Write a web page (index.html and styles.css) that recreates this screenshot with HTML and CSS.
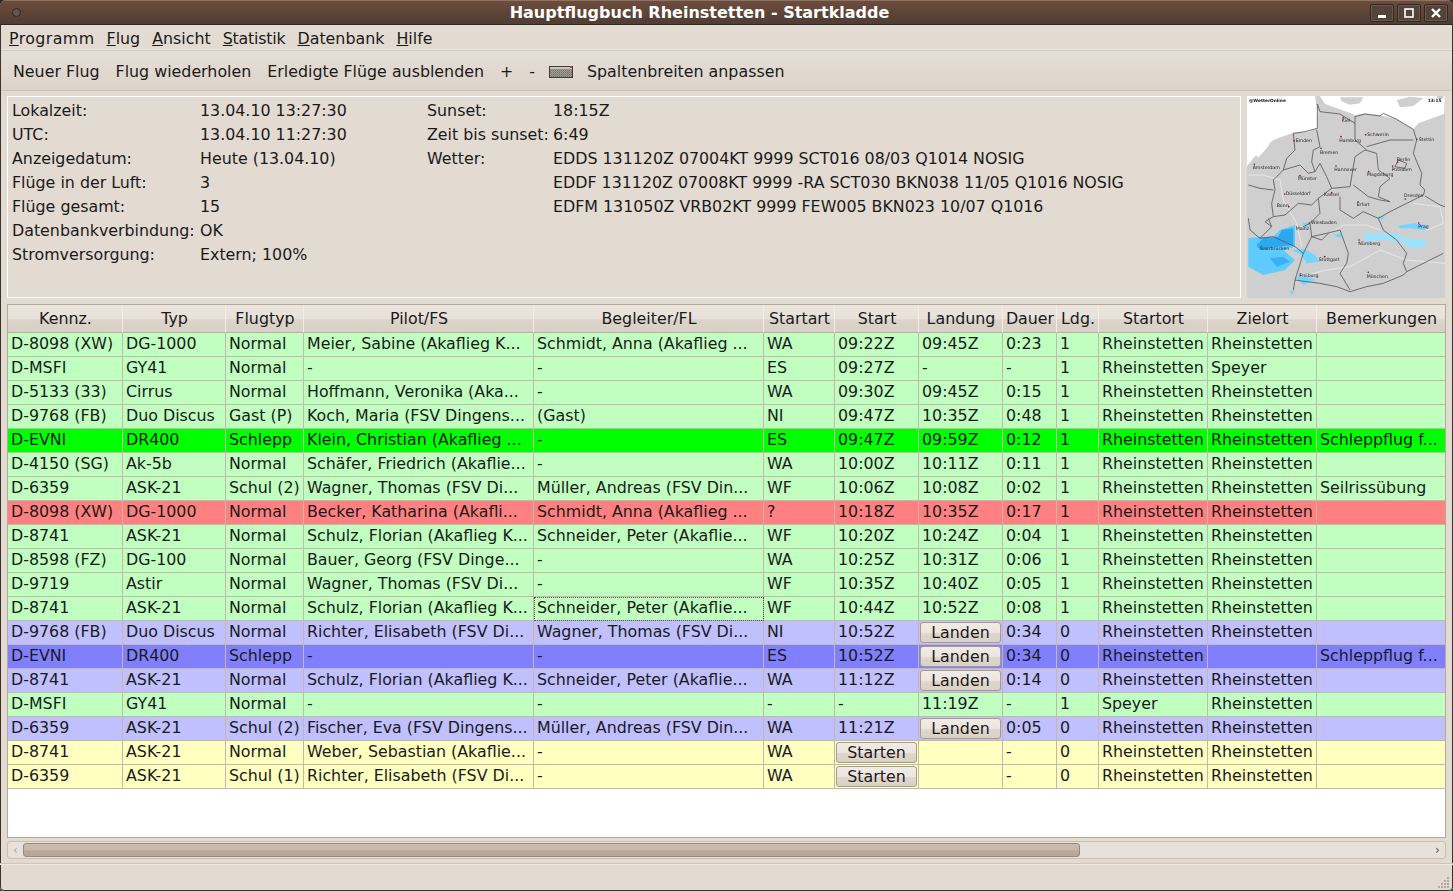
FILE: index.html
```html
<!DOCTYPE html>
<html lang="de">
<head>
  <meta charset="UTF-8">
  <title>Hauptflugbuch Rheinstetten - Startkladde</title>
  <link rel="stylesheet" href="styles.css">
</head>
<body>
  <div class="window">
    <div class="titlebar">
      <span class="close-dot"></span>
      <span class="title">Hauptflugbuch Rheinstetten - Startkladde</span>
      <div class="win-buttons">
        <span class="win-btn"><svg width="12" height="12" viewBox="0 0 12 12"><rect x="2" y="8" width="8" height="3" fill="#fff"/></svg></span>
        <span class="win-btn"><svg width="12" height="12" viewBox="0 0 12 12"><rect x="2" y="2" width="8" height="8" fill="none" stroke="#fff" stroke-width="1.6"/></svg></span>
        <span class="win-btn"><svg width="12" height="12" viewBox="0 0 12 12"><path d="M2 2l8 8M10 2l-8 8" stroke="#fff" stroke-width="2.4"/></svg></span>
      </div>
    </div>

    <div class="menubar">
      <span class="m-wide"><u>P</u>rogramm</span>
      <span><u>F</u>lug</span>
      <span><u>A</u>nsicht</span>
      <span class="m-tight"><u>S</u>tatistik</span>
      <span><u>D</u>atenbank</span>
      <span><u>H</u>ilfe</span>
    </div>

    <div class="toolbar">
      <span>Neuer Flug</span>
      <span>Flug wiederholen</span>
      <span>Erledigte Flüge ausblenden</span>
      <span>+</span>
      <span>-</span>
      <svg class="tool-icon" width="24" height="12" viewBox="0 0 24 12">
        <defs>
          <pattern id="grain" width="2" height="2" patternUnits="userSpaceOnUse">
            <rect width="2" height="2" fill="#a09b91"/>
            <rect width="1" height="1" fill="#77726a"/>
            <rect x="1" y="1" width="1" height="1" fill="#8a857c"/>
          </pattern>
        </defs>
        <rect width="24" height="12" fill="#3f3b36"/>
        <rect x="1" y="1" width="22" height="10" fill="url(#grain)"/>
        <rect x="1" y="1" width="22" height="2" fill="#c9c5bc"/>
        <rect x="21" y="0" width="2" height="2" fill="#c0392b"/>
      </svg>
      <span>Spaltenbreiten anpassen</span>
    </div>

    <div class="info-row">
      <div class="info-panel">
        <div class="info-col col-a">
          <span>Lokalzeit:</span><span>13.04.10 13:27:30</span>
          <span>UTC:</span><span>13.04.10 11:27:30</span>
          <span>Anzeigedatum:</span><span>Heute (13.04.10)</span>
          <span>Flüge in der Luft:</span><span>3</span>
          <span>Flüge gesamt:</span><span>15</span>
          <span>Datenbankverbindung:</span><span>OK</span>
          <span>Stromversorgung:</span><span>Extern; 100%</span>
        </div>
        <div class="info-col col-b">
          <span>Sunset:</span><span>18:15Z</span>
          <span>Zeit bis sunset:</span><span>6:49</span>
          <span>Wetter:</span><span>EDDS 131120Z 07004KT 9999 SCT016 08/03 Q1014 NOSIG</span>
          <span></span><span>EDDF 131120Z 07008KT 9999 -RA SCT030 BKN038 11/05 Q1016 NOSIG</span>
          <span></span><span>EDFM 131050Z VRB02KT 9999 FEW005 BKN023 10/07 Q1016</span>
        </div>
      </div>
      <div class="map">
        <svg width="198" height="202" viewBox="21 18 594 606">
          <rect x="21" y="18" width="594" height="606" fill="#cfcfcf"/>
          <!-- sea -->
          <path d="M21 18H225L228 40 235 65 232 115 205 125 160 128 100 150 60 185 40 205 21 228Z" fill="#fff"/>
          <path d="M240 18L255 42 300 58 345 75 375 70 420 76 470 88 520 118 535 100 612 72 615 18Z" fill="#fff"/>
          <path d="M50 170l40-8-20 24-15 16-10-8z" fill="#fff"/>
          <path d="M300 22h70l-10 18-30 4-25-10zM470 30l40-10 40 4-30 24-40 4zM590 18h22l-4 10-14-2z" fill="#cfcfcf"/>
          <g fill="none" stroke="#e8e8e8" stroke-width="3">
            <path d="M25 255L70 255 120 270 130 330 170 400 185 470"/>
            <path d="M180 560L260 540 330 530 420 480 500 510 615 520"/>
            <path d="M270 430L310 405 380 405 420 420"/>
            <path d="M520 340L600 350 610 400 560 420"/>
            <path d="M410 190L415 240 450 265"/>
          </g>
          <!-- rain -->
          <path d="M25 445L60 440 100 440 120 420 165 405 165 470 130 480 165 510 135 540 70 555 25 530Z" fill="#5ecbff"/>
          <path d="M70 445L115 440 125 420 160 415 160 465 110 470 60 480 50 465Z" fill="#2aa8f0"/>
          <path d="M90 505L130 500 150 515 110 530Z" fill="#3ab0f0"/>
          <path d="M155 480L195 478 225 495 240 515 200 520 185 495Z" fill="#74d4ff"/>
          <path d="M165 560L205 560 225 570 190 585Z" fill="#74d4ff"/>
          <path d="M370 430L420 430 470 432 500 445 555 450 560 470 520 475 480 455 430 450 375 455Z" fill="#9ce2ff"/>
          <path d="M475 408L520 400 560 405 555 420 510 415 480 415Z" fill="#74d4ff"/>
          <path d="M410 380L435 378 425 390ZM280 432L305 432 305 443 290 440ZM185 400L210 400 200 415ZM150 605L165 600 155 615Z" fill="#74d4ff"/>
          <!-- borders -->
          <g fill="none" stroke="#5c5c5c" stroke-width="2.6">
            <path d="M232 42L240 65 300 72 345 100 345 80 375 72 420 78 430 70 470 88 520 118 530 150 520 190 545 250 540 285 555 300 550 315 500 340 450 365 415 385 430 420 470 450 500 490 490 520 500 545 490 555 430 580 380 590 330 605 290 590 240 580 200 575 165 570 160 600"/>
            <path d="M232 42L232 115 195 125 160 130 165 180 140 205 130 240 100 270 105 300 95 340 100 380 75 395 95 410 60 445 100 440 165 470 190 490 165 570"/>
            <path d="M25 285L60 295 100 300M100 380L135 375 175 340M25 385L30 420 60 445M95 410L85 385"/>
            <path d="M230 120L240 170 220 180 215 215 225 245 205 250 180 225 130 240"/>
            <path d="M225 245L240 220 260 260 275 295 235 325 215 345 175 340"/>
            <path d="M275 295L330 290 345 200 375 180 410 190 415 240 450 265 420 290 415 320 450 335 420 330 385 320 340 285"/>
            <path d="M300 320L300 360 340 385 370 365 415 385"/>
            <path d="M210 400L215 440 260 430 300 420 325 490 320 520 300 550 330 600"/>
            <path d="M235 325L240 370 210 400 190 410M265 430L245 450 215 440 190 490"/>
            <path d="M345 100L345 150 380 180M380 170L450 150 520 150M465 230L475 210 500 220 495 235 465 230"/>
            <path d="M555 318L600 345 615 350M500 545L610 490"/>
          </g>
          <g fill="#8a1a1a">
            <circle cx="310" cy="83" r="2.5"/><circle cx="377" cy="134" r="2.5"/><circle cx="303" cy="140" r="2.5"/><circle cx="530" cy="148" r="2.5"/>
            <circle cx="162" cy="152" r="2.5"/><circle cx="243" cy="175" r="2.5"/><circle cx="43" cy="223" r="2.5"/><circle cx="288" cy="228" r="2.5"/>
            <circle cx="473" cy="217" r="2.5"/><circle cx="458" cy="228" r="2.5"/><circle cx="386" cy="245" r="2.5"/><circle cx="180" cy="257" r="2.5"/>
            <circle cx="134" cy="312" r="2.5"/><circle cx="275" cy="308" r="2.5"/><circle cx="496" cy="327" r="2.5"/><circle cx="146" cy="350" r="2.5"/>
            <circle cx="354" cy="336" r="2.5"/><circle cx="536" cy="399" r="2.5"/><circle cx="208" cy="399" r="2.5"/><circle cx="357" cy="450" r="2.5"/>
            <circle cx="254" cy="500" r="2.5"/><circle cx="182" cy="556" r="2.5"/><circle cx="385" cy="547" r="2.5"/>
          </g>
          <g class="map-labels">
            <text x="27" y="36" class="map-brand">@WetterOnline</text>
            <text x="563" y="36" class="map-brand">13:15</text>
            <text x="305" y="97">Kiel</text>
            <text x="382" y="138">Schwerin</text>
            <text x="298" y="155">Hamburg</text>
            <text x="536" y="152">Stettin</text>
            <text x="167" y="155">Emden</text>
            <text x="240" y="193">Bremen</text>
            <text x="38" y="238">Amsterdam</text>
            <text x="283" y="243">Hannover</text>
            <text x="470" y="212">Berlin</text>
            <text x="455" y="243">Potsdam</text>
            <text x="381" y="258">Magdeburg</text>
            <text x="174" y="270">Münster</text>
            <text x="137" y="316">Düsseldorf</text>
            <text x="252" y="319">Kassel</text>
            <text x="492" y="322">Dresden</text>
            <text x="110" y="352">Bonn</text>
            <text x="350" y="349">Erfurt</text>
            <text x="535" y="414">Prag</text>
            <text x="213" y="403">Wiesbaden</text>
            <text x="167" y="421">Mainz</text>
            <text x="355" y="464">Nürnberg</text>
            <text x="60" y="480">Saarbrücken</text>
            <text x="236" y="514">Stuttgart</text>
            <text x="178" y="562">Freiburg</text>
            <text x="380" y="563">München</text>
          </g>
        </svg>
      </div>
    </div>

    <div class="table-wrap">
      <table class="flights">
        <colgroup>
          <col class="c-kenn"><col class="c-typ"><col class="c-art"><col class="c-pilot"><col class="c-pilot">
          <col class="c-startart"><col class="c-time"><col class="c-time"><col class="c-dauer"><col class="c-ldg">
          <col class="c-ort"><col class="c-ort"><col class="c-rem">
        </colgroup>
        <thead>
          <tr><th>Kennz.</th><th>Typ</th><th>Flugtyp</th><th>Pilot/FS</th><th>Begleiter/FL</th><th>Startart</th><th>Start</th><th>Landung</th><th>Dauer</th><th>Ldg.</th><th>Startort</th><th>Zielort</th><th>Bemerkungen</th></tr>
        </thead>
        <tbody>
          <tr class="done"><td>D-8098 (XW)</td><td>DG-1000</td><td>Normal</td><td>Meier, Sabine (Akaflieg K...</td><td>Schmidt, Anna (Akaflieg ...</td><td>WA</td><td>09:22Z</td><td>09:45Z</td><td>0:23</td><td>1</td><td>Rheinstetten</td><td>Rheinstetten</td><td></td></tr>
          <tr class="done"><td>D-MSFI</td><td>GY41</td><td>Normal</td><td>-</td><td>-</td><td>ES</td><td>09:27Z</td><td>-</td><td>-</td><td>1</td><td>Rheinstetten</td><td>Speyer</td><td></td></tr>
          <tr class="done"><td>D-5133 (33)</td><td>Cirrus</td><td>Normal</td><td>Hoffmann, Veronika (Aka...</td><td>-</td><td>WA</td><td>09:30Z</td><td>09:45Z</td><td>0:15</td><td>1</td><td>Rheinstetten</td><td>Rheinstetten</td><td></td></tr>
          <tr class="done"><td>D-9768 (FB)</td><td>Duo Discus</td><td>Gast (P)</td><td>Koch, Maria (FSV Dingens...</td><td>(Gast)</td><td>NI</td><td>09:47Z</td><td>10:35Z</td><td>0:48</td><td>1</td><td>Rheinstetten</td><td>Rheinstetten</td><td></td></tr>
          <tr class="tow-done"><td>D-EVNI</td><td>DR400</td><td>Schlepp</td><td>Klein, Christian (Akaflieg ...</td><td>-</td><td>ES</td><td>09:47Z</td><td>09:59Z</td><td>0:12</td><td>1</td><td>Rheinstetten</td><td>Rheinstetten</td><td>Schleppflug f...</td></tr>
          <tr class="done"><td>D-4150 (SG)</td><td>Ak-5b</td><td>Normal</td><td>Schäfer, Friedrich (Akaflie...</td><td>-</td><td>WA</td><td>10:00Z</td><td>10:11Z</td><td>0:11</td><td>1</td><td>Rheinstetten</td><td>Rheinstetten</td><td></td></tr>
          <tr class="done"><td>D-6359</td><td>ASK-21</td><td>Schul (2)</td><td>Wagner, Thomas (FSV Di...</td><td>Müller, Andreas (FSV Din...</td><td>WF</td><td>10:06Z</td><td>10:08Z</td><td>0:02</td><td>1</td><td>Rheinstetten</td><td>Rheinstetten</td><td>Seilrissübung</td></tr>
          <tr class="error"><td>D-8098 (XW)</td><td>DG-1000</td><td>Normal</td><td>Becker, Katharina (Akafli...</td><td>Schmidt, Anna (Akaflieg ...</td><td>?</td><td>10:18Z</td><td>10:35Z</td><td>0:17</td><td>1</td><td>Rheinstetten</td><td>Rheinstetten</td><td></td></tr>
          <tr class="done"><td>D-8741</td><td>ASK-21</td><td>Normal</td><td>Schulz, Florian (Akaflieg K...</td><td>Schneider, Peter (Akaflie...</td><td>WF</td><td>10:20Z</td><td>10:24Z</td><td>0:04</td><td>1</td><td>Rheinstetten</td><td>Rheinstetten</td><td></td></tr>
          <tr class="done"><td>D-8598 (FZ)</td><td>DG-100</td><td>Normal</td><td>Bauer, Georg (FSV Dinge...</td><td>-</td><td>WA</td><td>10:25Z</td><td>10:31Z</td><td>0:06</td><td>1</td><td>Rheinstetten</td><td>Rheinstetten</td><td></td></tr>
          <tr class="done"><td>D-9719</td><td>Astir</td><td>Normal</td><td>Wagner, Thomas (FSV Di...</td><td>-</td><td>WF</td><td>10:35Z</td><td>10:40Z</td><td>0:05</td><td>1</td><td>Rheinstetten</td><td>Rheinstetten</td><td></td></tr>
          <tr class="done"><td>D-8741</td><td>ASK-21</td><td>Normal</td><td>Schulz, Florian (Akaflieg K...</td><td class="focus">Schneider, Peter (Akaflie...</td><td>WF</td><td>10:44Z</td><td>10:52Z</td><td>0:08</td><td>1</td><td>Rheinstetten</td><td>Rheinstetten</td><td></td></tr>
          <tr class="air"><td>D-9768 (FB)</td><td>Duo Discus</td><td>Normal</td><td>Richter, Elisabeth (FSV Di...</td><td>Wagner, Thomas (FSV Di...</td><td>NI</td><td>10:52Z</td><td class="btn-cell"><button>Landen</button></td><td>0:34</td><td>0</td><td>Rheinstetten</td><td>Rheinstetten</td><td></td></tr>
          <tr class="tow-air"><td>D-EVNI</td><td>DR400</td><td>Schlepp</td><td>-</td><td>-</td><td>ES</td><td>10:52Z</td><td class="btn-cell"><button>Landen</button></td><td>0:34</td><td>0</td><td>Rheinstetten</td><td></td><td>Schleppflug f...</td></tr>
          <tr class="air"><td>D-8741</td><td>ASK-21</td><td>Normal</td><td>Schulz, Florian (Akaflieg K...</td><td>Schneider, Peter (Akaflie...</td><td>WA</td><td>11:12Z</td><td class="btn-cell"><button>Landen</button></td><td>0:14</td><td>0</td><td>Rheinstetten</td><td>Rheinstetten</td><td></td></tr>
          <tr class="done"><td>D-MSFI</td><td>GY41</td><td>Normal</td><td>-</td><td>-</td><td>-</td><td>-</td><td>11:19Z</td><td>-</td><td>1</td><td>Speyer</td><td>Rheinstetten</td><td></td></tr>
          <tr class="air"><td>D-6359</td><td>ASK-21</td><td>Schul (2)</td><td>Fischer, Eva (FSV Dingens...</td><td>Müller, Andreas (FSV Din...</td><td>WA</td><td>11:21Z</td><td class="btn-cell"><button>Landen</button></td><td>0:05</td><td>0</td><td>Rheinstetten</td><td>Rheinstetten</td><td></td></tr>
          <tr class="prep"><td>D-8741</td><td>ASK-21</td><td>Normal</td><td>Weber, Sebastian (Akaflie...</td><td>-</td><td>WA</td><td class="btn-cell"><button>Starten</button></td><td></td><td>-</td><td>0</td><td>Rheinstetten</td><td>Rheinstetten</td><td></td></tr>
          <tr class="prep"><td>D-6359</td><td>ASK-21</td><td>Schul (1)</td><td>Richter, Elisabeth (FSV Di...</td><td>-</td><td>WA</td><td class="btn-cell"><button>Starten</button></td><td></td><td>-</td><td>0</td><td>Rheinstetten</td><td>Rheinstetten</td><td></td></tr>
        </tbody>
      </table>
    </div>

    <div class="scrollbar">
      <span class="arrow off">‹</span>
      <div class="trough"><div class="thumb"></div></div>
      <span class="arrow">›</span>
    </div>
    <div class="statusbar">
      <svg class="grip" width="12" height="12" viewBox="0 0 12 12" fill="#b3a89b">
        <rect x="9" y="0" width="2" height="2"/>
        <rect x="6" y="3" width="2" height="2"/><rect x="9" y="3" width="2" height="2"/>
        <rect x="3" y="6" width="2" height="2"/><rect x="6" y="6" width="2" height="2"/><rect x="9" y="6" width="2" height="2"/>
        <rect x="0" y="9" width="2" height="2"/><rect x="3" y="9" width="2" height="2"/><rect x="6" y="9" width="2" height="2"/><rect x="9" y="9" width="2" height="2"/>
      </svg>
    </div>
  </div>
</body>
</html>
```

FILE: styles.css
```css
* {
  box-sizing: border-box;
}

html, body {
  margin: 0;
  padding: 0;
  background: #2e2a26;
}

body {
  width: 1453px;
  height: 891px;
  overflow: hidden;
  font-family: "DejaVu Sans", sans-serif;
  font-size: 15.85px;
  color: #1a1a1a;
}

.window {
  display: flex;
  flex-direction: column;
  width: 1453px;
  height: 891px;
  background: #e3dbd2;
  border-radius: 6px 6px 4px 4px;
  outline: 1px solid #3a332c;
  outline-offset: -1px;
  overflow: hidden;
}

.titlebar {
  display: flex;
  align-items: center;
  position: relative;
  height: 25px;
  flex: none;
  background: linear-gradient(#6d4c3c, #4f3d33);
  border-top: 1px solid #8a7466;
  border-bottom: 1px solid #2f2722;
}

.close-dot {
  width: 9px;
  height: 9px;
  margin-left: 12px;
  border-radius: 50%;
  border: 1px solid #2f2722;
  background: #62574f;
}

.title {
  position: absolute;
  left: 0;
  right: 54px;
  text-align: center;
  color: #fff;
  font-weight: bold;
  font-size: 16px;
}

.win-buttons {
  display: flex;
  gap: 3px;
  margin-left: auto;
  margin-right: 5px;
}

.win-btn {
  display: flex;
  align-items: center;
  justify-content: center;
  width: 24px;
  height: 18px;
  border: 1px solid #33291f;
  border-radius: 2px;
  box-shadow: inset 0 0 0 1px #6d5a4d;
  background: #54433a;
}

.menubar {
  display: flex;
  gap: 12px;
  height: 26px;
  flex: none;
  align-items: center;
  padding-left: 9px;
  padding-top: 2px;
  background: #e3dbd2;
  border-bottom: 1px solid #cfc5ba;
  box-shadow: inset 0 -1px 0 #efe9e2;
}

.m-wide {
  letter-spacing: 0.4px;
}

.m-tight {
  letter-spacing: -0.2px;
}

.toolbar {
  display: flex;
  align-items: center;
  gap: 16px;
  height: 40px;
  flex: none;
  padding-left: 13px;
  padding-top: 2px;
  background: linear-gradient(#e6dfd7, #dcd3ca);
  border-bottom: 1px solid #cdc2b6;
}

.tool-icon {
  margin: 0 -2px;
}

.info-row {
  display: flex;
  gap: 6px;
  height: 202px;
  flex: none;
  margin: 5px 8px 0 7px;
}

.info-panel {
  display: flex;
  flex: 1;
  padding-top: 1px;
  padding-left: 4px;
  border: 1px solid #fff;
}

.info-col {
  display: grid;
  grid-auto-rows: 24px;
  align-items: center;
  align-content: start;
}

.col-a {
  grid-template-columns: 188px auto;
  width: 415px;
}

.col-b {
  grid-template-columns: 126px auto;
}

.map {
  width: 198px;
  flex: none;
  background: #fff;
}

.map svg {
  display: block;
  filter: blur(0.35px);
}

.map-labels text {
  font-family: "DejaVu Sans", sans-serif;
  font-size: 14px;
  fill: #222;
}

.map-labels .map-brand {
  font-weight: bold;
  font-size: 13px;
  fill: #111;
}

.table-wrap {
  flex: none;
  height: 534px;
  margin: 6px 7px 0;
  background: #fff;
  border: 1px solid #b5a99c;
  overflow: hidden;
}

.flights {
  table-layout: fixed;
  border-collapse: separate;
  border-spacing: 0;
  width: 1438px;
}

.c-kenn { width: 115px; }
.c-typ { width: 103px; }
.c-art { width: 78px; }
.c-pilot { width: 230px; }
.c-startart { width: 71px; }
.c-time { width: 84px; }
.c-dauer { width: 54px; }
.c-ldg { width: 42px; }
.c-ort { width: 109px; }
.c-rem { width: 129px; }

.flights th {
  height: 28px;
  padding: 0 0 0 1px;
  font-weight: normal;
  white-space: nowrap;
  background: linear-gradient(#ebe5de 0, #e8e1da 50%, #dcd3ca 55%, #d8cfc5 100%);
  border-right: 1px solid #f2ede7;
  border-bottom: 1px solid #b9ada1;
}

.flights td {
  height: 24px;
  padding: 0 0 3px 3px;
  white-space: nowrap;
  overflow: hidden;
  border-right: 1px solid #c4b8ae;
  border-bottom: 1px solid #c4b8ae;
}

.done td { background: #c0ffc0; }
.tow-done td { background: #00ff00; }
.error td { background: #ff8080; }
.air td { background: #c0c0ff; }
.tow-air td { background: #8080ff; }
.prep td { background: #ffffc0; }

.flights td.focus {
  outline: 1px dotted #555;
  outline-offset: -1px;
}

.flights td.btn-cell {
  padding: 0 0 0 1px;
  vertical-align: middle;
}

.flights button {
  display: block;
  width: 81px;
  height: 21px;
  padding: 0;
  font: inherit;
  color: inherit;
  border: 1px solid #a8998b;
  border-radius: 3px;
  background: linear-gradient(#f0ebe5 0, #ebe5de 50%, #dfd6cd 55%, #d9d0c6 100%);
}

.scrollbar {
  display: flex;
  align-items: center;
  height: 18px;
  flex: none;
  margin: 3px 7px 0;
  background: #e8e1da;
  border: 1px solid #c9beb2;
  border-radius: 3px;
}

.arrow {
  width: 15px;
  flex: none;
  text-align: center;
  font-size: 12px;
  line-height: 14px;
  color: #5c544c;
}

.arrow.off {
  color: #b0a79d;
}

.trough {
  flex: 1;
  height: 14px;
}

.thumb {
  width: 1057px;
  height: 14px;
  border: 1px solid #96887b;
  border-radius: 3px;
  background: linear-gradient(#c9bcaf 0, #c6b9ac 50%, #b8a99b 55%, #b5a698 100%);
}

.statusbar {
  position: relative;
  flex: 1;
  margin-top: 4px;
  border-top: 1px solid #cfc5ba;
  box-shadow: inset 0 1px 0 #efe9e2;
}

.grip {
  position: absolute;
  right: 3px;
  bottom: 2px;
}
```
